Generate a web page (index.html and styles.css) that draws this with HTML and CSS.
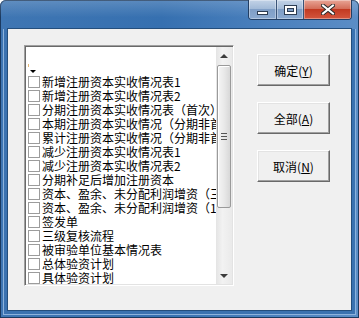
FILE: index.html
```html
<!DOCTYPE html>
<html lang="zh-CN">
<head>
  <meta charset="UTF-8">
  <title>选择报表</title>
  <link rel="stylesheet" href="styles.css">
</head>
<body>
  <div class="window">
    <!-- 标题栏 -->
    <div class="titlebar">
      <div class="caption">
        <div class="cap min"><span class="glyph-min"></span></div>
        <div class="cap max"><span class="glyph-max"></span></div>
        <div class="cap close">
          <svg width="14" height="11" viewBox="0 0 14 11">
            <path d="M2 1.5 L12 9.5 M12 1.5 L2 9.5" stroke="#2a2a2a" stroke-width="4" stroke-linecap="square"/>
            <path d="M2 1.5 L12 9.5 M12 1.5 L2 9.5" stroke="#fff" stroke-width="2" stroke-linecap="square"/>
          </svg>
        </div>
      </div>
    </div>

    <div class="frame">
      <div class="client">
        <!-- 报表列表 -->
        <div class="listbox">
          <div class="list">
            <div class="row"></div>
            <div class="row root"><span class="tick"></span><span class="drop"></span></div>
            <div class="row"><span class="check"></span>新增注册资本实收情况表1</div>
            <div class="row"><span class="check"></span>新增注册资本实收情况表2</div>
            <div class="row"><span class="check"></span>分期注册资本实收情况表（首次）</div>
            <div class="row"><span class="check"></span>本期注册资本实收情况（分期非首次）</div>
            <div class="row"><span class="check"></span>累计注册资本实收情况（分期非首次）</div>
            <div class="row"><span class="check"></span>减少注册资本实收情况表1</div>
            <div class="row"><span class="check"></span>减少注册资本实收情况表2</div>
            <div class="row"><span class="check"></span>分期补足后增加注册资本</div>
            <div class="row"><span class="check"></span>资本、盈余、未分配利润增资（三）</div>
            <div class="row"><span class="check"></span>资本、盈余、未分配利润增资（1）</div>
            <div class="row"><span class="check"></span>签发单</div>
            <div class="row"><span class="check"></span>三级复核流程</div>
            <div class="row"><span class="check"></span>被审验单位基本情况表</div>
            <div class="row"><span class="check"></span>总体验资计划</div>
            <div class="row"><span class="check"></span>具体验资计划</div>
          </div>
          <div class="scrollbar">
            <div class="arrow"><span class="tri-up"></span></div>
            <div class="track">
              <div class="thumb"><span class="grip"></span></div>
            </div>
            <div class="arrow"><span class="tri-down"></span></div>
          </div>
        </div>

        <!-- 操作按钮 -->
        <div class="buttons">
          <button class="btn">确定(<u>Y</u>)</button>
          <button class="btn">全部(<u>A</u>)</button>
          <button class="btn">取消(<u>N</u>)</button>
        </div>
      </div>
    </div>
  </div>
</body>
</html>
```

FILE: styles.css
```css
body {
  margin: 0;
  font-family: "Noto Sans CJK SC", "DejaVu Sans", sans-serif;
  font-size: 12px;
  background: #fff;
}

.window {
  width: 359px;
  height: 318px;
  box-sizing: border-box;
  display: flex;
  flex-direction: column;
  background: linear-gradient(90deg, #3f76b3 0%, #3670b0 45%, #4a80bd 75%, #5b8dc6 100%);
  border-radius: 6px 6px 0 0;
  box-shadow: inset 0 0 0 1px #1b3a60;
}

.titlebar {
  height: 29px;
  flex-shrink: 0;
  display: flex;
  justify-content: flex-end;
  background: linear-gradient(180deg, rgba(255,255,255,0.18), rgba(255,255,255,0) 60%);
  border-radius: 6px 6px 0 0;
}

.caption {
  display: flex;
  height: 20px;
  margin-right: 7px;
  border: 1px solid #223e63;
  border-top: none;
  border-radius: 0 0 4px 4px;
  overflow: hidden;
  box-sizing: border-box;
}

.cap {
  display: flex;
  align-items: center;
  justify-content: center;
  height: 19px;
  box-shadow: inset 0 0 0 1px rgba(255,255,255,0.35);
}

.min, .max {
  width: 27px;
  background: linear-gradient(180deg, #c3d3e7 0%, #a3bbd8 45%, #7f9ec6 50%, #8aa9d0 100%);
  border-right: 1px solid #3a5478;
}

.max {
  width: 26px;
}

.close {
  width: 47px;
  background: linear-gradient(180deg, #e8a596 0%, #d46f5b 45%, #c23a22 50%, #d3563e 100%);
}

.glyph-min {
  width: 9px;
  height: 2px;
  margin-top: 7px;
  background: #fff;
  border: 1px solid #2c3c52;
}

.glyph-max {
  width: 7px;
  height: 4px;
  border: 2px solid #fff;
  box-shadow: 0 0 0 1px #2c3c52, inset 0 0 0 1px #2c3c52;
}

.frame {
  flex: 1;
  display: flex;
  margin: 0 3px 3px;
  padding: 0 4px 4px;
  border: 1px solid #8cb2dc;
  border-top: none;
  background: #3b72b0;
}

.client {
  flex: 1;
  display: flex;
  align-items: flex-start;
  padding: 16px 0 0 16px;
  background: #f0f0f0;
  box-shadow: 0 0 0 1px #244e7c;
}

.listbox {
  width: 210px;
  height: 241px;
  box-sizing: border-box;
  display: flex;
  background: #fff;
  border-style: solid;
  border-width: 1px;
  border-color: #a0a0a0 #fff #fff #a0a0a0;
  box-shadow: inset 1px 1px 0 #696969, inset -1px -1px 0 #e3e3e3;
  padding: 1px 1px 1px 1px;
}

.list {
  flex: 1;
  overflow: hidden;
  white-space: nowrap;
}

.row {
  height: 14px;
  line-height: 14px;
  display: flex;
  align-items: center;
  color: #000;
}

.check {
  width: 12px;
  height: 12px;
  box-sizing: border-box;
  margin: 0 2px 0 2px;
  flex-shrink: 0;
  border: 1px solid #9c9c9c;
  background: #fff;
}

.root {
  position: relative;
}

.tick {
  position: absolute;
  left: 2px;
  top: 3px;
  width: 1px;
  height: 3px;
  background: #e2b878;
}

.drop {
  margin: 6px 0 0 4px;
  width: 0;
  height: 0;
  border-left: 3px solid transparent;
  border-right: 3px solid transparent;
  border-top: 3px solid #000;
}

.scrollbar {
  width: 16px;
  display: flex;
  flex-direction: column;
  background: linear-gradient(90deg, #e4e4e4, #f2f2f2 40%, #eaeaea);
}

.arrow {
  height: 17px;
  flex-shrink: 0;
  display: flex;
  align-items: center;
  justify-content: center;
}

.tri-up, .tri-down {
  width: 0;
  height: 0;
  border-left: 4px solid transparent;
  border-right: 4px solid transparent;
}

.tri-up {
  border-bottom: 4px solid #3c3c3c;
}

.tri-down {
  border-top: 4px solid #3c3c3c;
}

.track {
  flex: 1;
  padding-top: 1px;
}

.thumb {
  height: 143px;
  margin: 0 1px;
  box-sizing: border-box;
  border: 1px solid #9a9a9a;
  border-radius: 2px;
  background: linear-gradient(90deg, #f5f5f5, #e9e9e9 50%, #d8d8d8);
  box-shadow: inset 1px 1px 0 #fff;
  display: flex;
  align-items: center;
  justify-content: center;
}

.grip {
  width: 6px;
  height: 5px;
  border-top: 1px solid #555;
  border-bottom: 1px solid #555;
  background: linear-gradient(#555, #555) center / 6px 1px no-repeat;
}

.buttons {
  display: flex;
  flex-direction: column;
  gap: 16px;
  margin: 9px 0 0 23px;
}

.btn {
  width: 73px;
  height: 32px;
  box-sizing: border-box;
  padding: 0;
  font-family: "Noto Sans CJK SC", "DejaVu Sans", sans-serif;
  font-size: 12px;
  color: #000;
  background: #f0f0f0;
  border: 1px solid;
  border-color: #fff #696969 #696969 #fff;
  box-shadow: inset -1px -1px 0 #a0a0a0, inset 1px 1px 0 #e3e3e3;
}
```
